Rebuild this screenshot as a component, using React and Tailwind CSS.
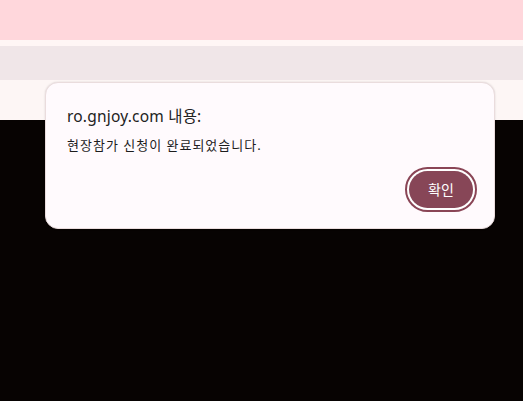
import React from 'react';

const App = () => {
  return (
    <div
      className="relative w-[523px] h-[401px] overflow-hidden flex flex-col"
      style={{ fontFamily: '"Noto Sans", "Noto Sans CJK KR", sans-serif' }}
    >
      {/* Page behind the dialog */}
      <div className="h-[40px] bg-[#ffd7dc]" />
      <div className="h-[6px] bg-[#fff6f5]" />
      <div className="h-[34px] bg-[#f0e6e8]" />
      <div className="h-[40px] bg-[#fdf6f5]" />
      <div className="flex-1 bg-[#070302]" />

      {/* Alert dialog */}
      <div className="absolute left-[45px] top-[82px] w-[450px] h-[147px] rounded-[13px] bg-[#fffafd] border border-[#eadcdd] shadow-[0_0_2px_rgba(0,0,0,0.15)] flex flex-col pl-[21px] pr-[17px] pt-[22px] pb-[16px]">
        <div className="text-[15.5px] leading-[22px] tracking-[0.2px] text-[#222222]">ro.gnjoy.com 내용:</div>
        <div className="mt-[9px] text-[13px] leading-[18px] tracking-[1px] text-[#1d1d1d]">현장참가 신청이 완료되었습니다.</div>
        <div className="mt-auto flex justify-end">
          <button className="w-[72px] h-[45px] rounded-full border-2 border-[#8a4556] p-[2px] bg-white">
            <span className="flex w-full h-full items-center justify-center rounded-full bg-[#874657] text-white text-[14px]">
              확인
            </span>
          </button>
        </div>
      </div>
    </div>
  );
};

export default App;
